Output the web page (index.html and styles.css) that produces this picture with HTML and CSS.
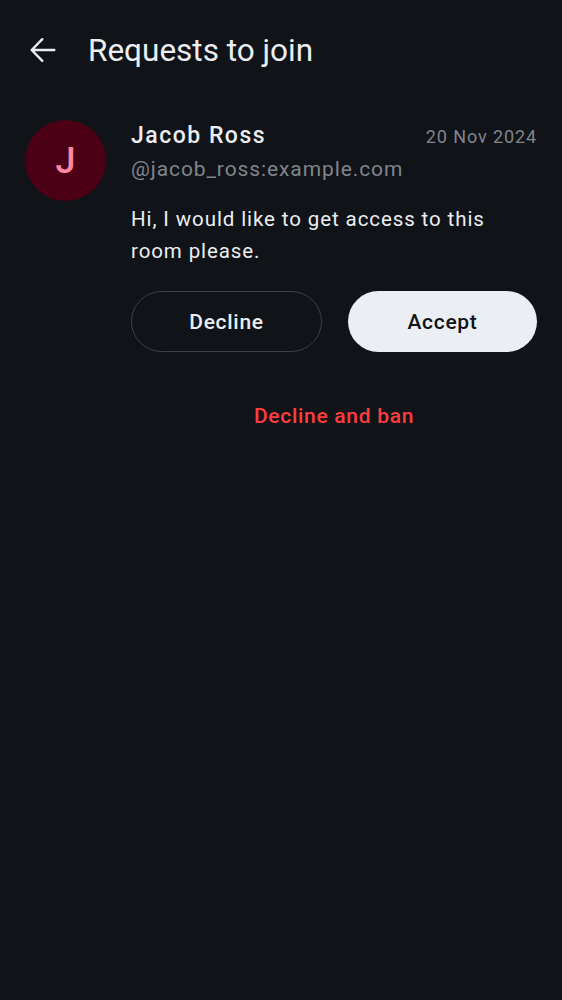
FILE: index.html
```html
<!DOCTYPE html>
<html>
<head>
<meta charset="utf-8">
<link rel="stylesheet" href="styles.css">
</head>
<body>
<header class="topbar">
  <svg class="back" viewBox="0 0 26 26" width="26" height="26"><path d="M24.3 13H1.7M12.3 2.2L1.7 13L12.3 23.8" fill="none" stroke="#ebeef2" stroke-width="2.4" stroke-linecap="round" stroke-linejoin="round"/></svg>
  <h1 class="title">Requests to join</h1>
</header>
<main class="request">
  <div class="avatar">J</div>
  <div class="body">
    <div class="name-row">
      <span class="name">Jacob Ross</span>
      <span class="date">20 Nov 2024</span>
    </div>
    <div class="handle">@jacob_ross:example.com</div>
    <p class="message">Hi, I would like to get access to this room please.</p>
    <div class="actions">
      <button class="btn outline">Decline</button>
      <button class="btn filled">Accept</button>
    </div>
    <div class="ban">Decline and ban</div>
  </div>
</main>
</body>
</html>
```
FILE: styles.css
```css
html, body {
  margin: 0;
  background: #101317;
  font-family: Roboto, "Noto Sans", sans-serif;
  color: #ebeef2;
  height: 100%;
}
.topbar {
  height: 100px;
  display: flex;
  align-items: center;
  padding-left: 30px;
  box-sizing: border-box;
}
.back { display: block; }
.title {
  margin: 0 0 0 32px;
  font-size: 31.5px;
  font-weight: 400;
  color: #ebeef2;
}
.request {
  display: flex;
  padding: 20px 25px 0 25px;
  gap: 25px;
}
.avatar {
  flex: none;
  width: 81px;
  height: 81px;
  border-radius: 50%;
  background: #4b0016;
  color: #ff88a3;
  font-size: 36px;
  font-weight: 500;
  display: flex;
  align-items: center;
  justify-content: center;
}
.body { flex: 1; display: flex; flex-direction: column; }
.name-row {
  display: flex;
  justify-content: space-between;
  align-items: baseline;
  line-height: 32px;
}
.name { font-size: 23px; font-weight: 500; letter-spacing: 1.5px; }
.date { font-size: 18px; color: #80858d; letter-spacing: 0.9px; }
.handle { font-size: 21px; color: #80858d; line-height: 32px; letter-spacing: 0.9px; }
.message {
  margin: 18px 0 0 0;
  font-size: 20.5px;
  line-height: 32px;
  letter-spacing: 0.9px;
}
.actions {
  display: flex;
  gap: 26px;
  margin-top: 24px;
}
.btn {
  flex: 1;
  height: 61px;
  border-radius: 31px;
  font-family: Roboto, sans-serif;
  font-size: 21px;
  font-weight: 500;
  letter-spacing: 0.7px;
}
.outline { background: transparent; border: 1px solid #3d4045; color: #ebeef2; }
.filled { background: #ebeef2; border: none; color: #101317; }
.ban {
  text-align: center;
  color: #ff3d3d;
  font-size: 21px;
  font-weight: 500;
  letter-spacing: 0.7px;
  margin-top: 52px;
}
```
